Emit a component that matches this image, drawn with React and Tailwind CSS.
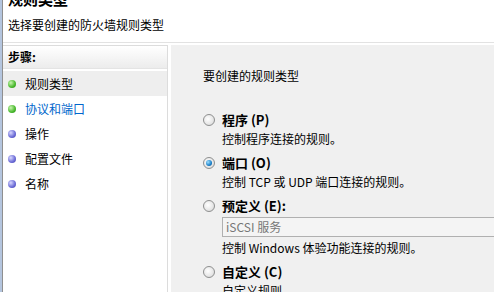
import React from "react";

const STEPS = [
  { label: "规则类型", done: true, active: true },
  { label: "协议和端口", done: true, current: true },
  { label: "操作" },
  { label: "配置文件" },
  { label: "名称" },
];

const OPTIONS = [
  { key: "program", title: "程序 (P)", desc: "控制程序连接的规则。" },
  { key: "port", title: "端口 (O)", desc: "控制 TCP 或 UDP 端口连接的规则。", checked: true },
  { key: "predef", title: "预定义 (E):", desc: "控制 Windows 体验功能连接的规则。", input: "iSCSI 服务" },
  { key: "custom", title: "自定义 (C)", desc: "自定义规则。" },
];

function Bullet({ green }) {
  return (
    <span
      className={`block w-[8px] h-[8px] rounded-full shrink-0 ${
        green
          ? "bg-[radial-gradient(circle_at_35%_35%,#c8f5b0,#48b82c_60%,#2f8a1c)]"
          : "bg-[radial-gradient(circle_at_35%_35%,#d8d8ff,#6a6ad6_60%,#4343a8)]"
      }`}
    />
  );
}

function Radio({ checked }) {
  return (
    <span className="flex items-center justify-center w-[12px] h-[12px] rounded-full border border-[#8e8f8f] bg-[radial-gradient(circle_at_40%_40%,#ffffff,#e6e6e6_60%,#cfcfcf)] shrink-0">
      {checked && (
        <span className="block w-[6px] h-[6px] rounded-full bg-[radial-gradient(circle_at_35%_35%,#9fe0ff,#1a7fc8_60%,#0a4a85)]" />
      )}
    </span>
  );
}

export default function App() {
  return (
    <div
      className="w-[494px] h-[292px] overflow-hidden bg-white flex text-[12px] text-black"
      style={{ fontFamily: '"Noto Sans CJK SC", "Noto Sans", sans-serif' }}
    >
      <div className="w-[2px] bg-[#b4c5de] shrink-0" />
      <div className="w-[1px] bg-[#8f8f8f] shrink-0" />
      <div className="flex-1 flex flex-col min-w-0">
        {/* header */}
        <div className="h-[43px] pl-[5px] border-b border-[#e2e2e2] shrink-0">
          <div className="mt-[-11px] text-[15px] font-bold leading-[20px]">规则类型</div>
          <div className="mt-[8px] leading-[16px]">选择要创建的防火墙规则类型</div>
        </div>
        <div className="flex flex-1 pt-[2px] min-h-0">
          {/* steps */}
          <div className="w-[165px] shrink-0 border-t border-r border-[#dcdcdc] flex flex-col">
            <div className="h-[23px] px-[5px] flex items-center font-bold bg-gradient-to-b from-white to-[#ececec] border-b border-[#e4e4e4]">
              步骤:
            </div>
            <div className="pt-[2px]">
              {STEPS.map((s) => (
                <div
                  key={s.label}
                  className={`h-[25px] flex items-center gap-[9px] pl-[5px] ${s.active ? "bg-[#eeeeee]" : ""}`}
                >
                  <Bullet green={s.done} />
                  <span className={s.current ? "text-[#0066cc]" : ""}>{s.label}</span>
                </div>
              ))}
            </div>
          </div>
          {/* options */}
          <div className="flex-1 ml-[3px] bg-[#f0f0f0] pl-[32px] pt-[23px] min-w-0">
            <div className="leading-[16px]">要创建的规则类型</div>
            <div className="mt-[28px] flex flex-col gap-[8px]">
              {OPTIONS.map((o) => (
                <div key={o.key} className="flex flex-col">
                  <div className="flex items-center gap-[7px] h-[16px]">
                    <Radio checked={o.checked} />
                    <span className="font-bold text-[13px]">{o.title}</span>
                  </div>
                  <div className="pl-[19px] flex flex-col">
                    {o.input && (
                      <div className="mt-[3px] h-[20px] border border-[#b0b0b0] bg-[#f4f4f4] text-[#777] flex items-center pl-[3px] mr-[-10px]">
                        {o.input}
                      </div>
                    )}
                    <div className="leading-[16px] mt-[3px]">{o.desc}</div>
                  </div>
                </div>
              ))}
            </div>
          </div>
        </div>
      </div>
    </div>
  );
}
